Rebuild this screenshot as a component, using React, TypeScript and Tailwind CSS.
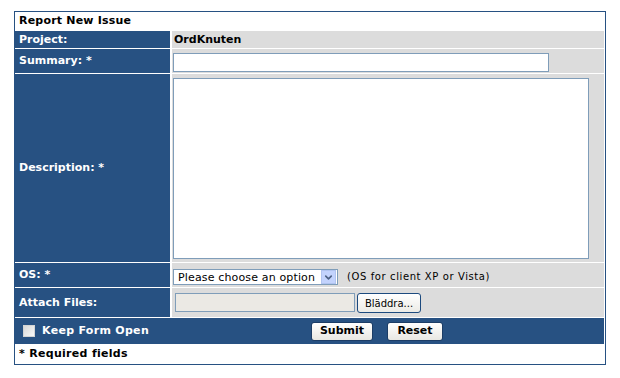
import { ChevronDown } from "lucide-react";

const font = { fontFamily: '"DejaVu Sans", Verdana, sans-serif' };

function Row({ label, h, children }: { label: string; h: string; children: React.ReactNode }) {
  return (
    <div className={`flex ${h}`}>
      <div className="w-[155px] shrink-0 bg-[#275182] text-white font-bold text-[11px] flex items-center pl-[4px] pt-px">
        {label}
      </div>
      <div className="w-[2px] shrink-0 bg-white" />
      <div className="flex-1 bg-[#dcdcdc] mr-px">{children}</div>
    </div>
  );
}

export default function App() {
  return (
    <div className="min-h-screen bg-white pt-[11px] pl-[14px]" style={font}>
      <div className="w-[592px] border border-[#275182] bg-white flex flex-col">
        {/* title */}
        <div className="h-[19px] flex items-center pl-[4px] text-[11px] font-bold text-black tracking-[0.2px]">
          Report New Issue
        </div>

        <div className="flex flex-col gap-px bg-white">
          <Row label="Project:" h="h-[17px]">
            <div className="h-full flex items-center pl-[2px] pt-px text-[11px] font-bold text-black">OrdKnuten</div>
          </Row>

          <Row label="Summary: *" h="h-[24px]">
            <div className="pt-[4px] pl-px">
              <input
                type="text"
                className="block w-[376px] h-[19px] bg-white border border-[#7f9db9] outline-none"
              />
            </div>
          </Row>

          <Row label="Description: *" h="h-[188px]">
            <div className="pt-[4px] pl-px">
              <textarea className="block w-[416px] h-[181px] bg-white border border-[#7f9db9] resize-none outline-none" />
            </div>
          </Row>

          <Row label="OS: *" h="h-[24px]">
            <div className="pt-[6px] pl-px flex items-start">
              <div className="w-[165px] h-[16px] bg-white border border-[#7f9db9] flex items-center">
                <span className="flex-1 pl-[4px] text-[11px] leading-none text-black tracking-[0.15px]">
                  Please choose an option
                </span>
                <div className="w-[15px] h-[14px] bg-[#c3d3fd] border border-[#b1c4f0] flex items-center justify-center mr-px">
                  <ChevronDown size={11} strokeWidth={3.5} className="text-[#4d6185]" />
                </div>
              </div>
              <span className="ml-[9px] text-[10px] leading-[16px] text-black tracking-[0.6px]">
                (OS for client XP or Vista)
              </span>
            </div>
          </Row>

          <Row label="Attach Files:" h="h-[29px]">
            <div className="pt-[5px] pl-[3px] flex items-start gap-[2px]">
              <div className="w-[180px] h-[19px] bg-[#ebe9e4] border border-[#7f9db9]" />
              <button className="w-[64px] h-[20px] rounded-[3px] border border-[#1c4a7e] bg-gradient-to-b from-white to-[#ecebe6] text-[10px] text-black">
                Bläddra...
              </button>
            </div>
          </Row>

          {/* bottom bar */}
          <div className="h-[26px] bg-[#275182] flex items-center mr-px">
            <div className="w-[296px] flex items-center pl-[8px]">
              <span className="w-[12px] h-[12px] border border-[#d4d4d4] bg-gradient-to-br from-[#d8d8d8] to-[#f8f8f8]" />
              <span className="ml-[7px] text-white font-bold text-[11px] tracking-[0.3px]">Keep Form Open</span>
            </div>
            <button className="w-[62px] h-[19px] rounded-[3px] border border-[#1c3d66] bg-gradient-to-b from-white to-[#e8e7e2] text-[11px] font-bold text-black">
              Submit
            </button>
            <button className="ml-[14px] w-[56px] h-[19px] rounded-[3px] border border-[#1c3d66] bg-gradient-to-b from-white to-[#e8e7e2] text-[11px] font-bold text-black">
              Reset
            </button>
          </div>

          <div className="h-[19px] flex items-center pl-[4px] text-[11px] font-bold text-black tracking-[0.3px]">
            * Required fields
          </div>
        </div>
      </div>
    </div>
  );
}
